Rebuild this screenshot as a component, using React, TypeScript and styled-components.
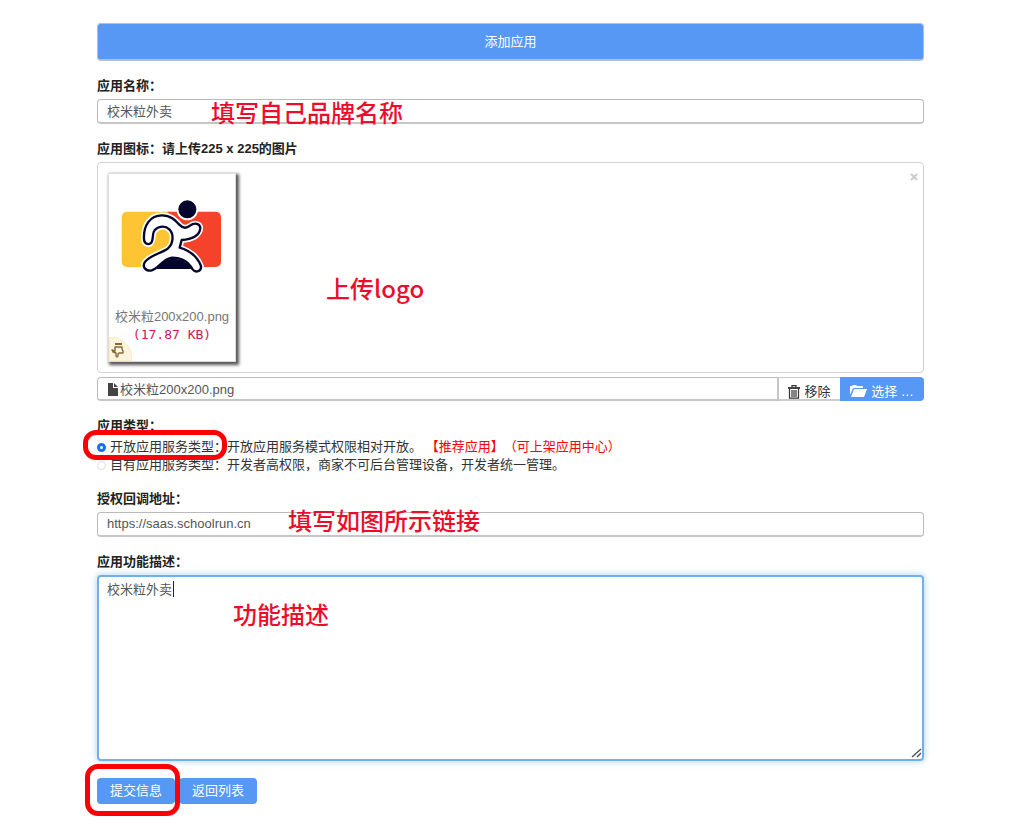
import React from "react";
import styled, { createGlobalStyle } from "styled-components";

const COLON = "\uFF1A";
const COMMA = "\uFF0C";

const GlobalStyle = createGlobalStyle`
  *, *::before, *::after { box-sizing: border-box; }
  body {
    margin: 0;
    background: #fff;
    color: #333;
    font: 13px/18px "Liberation Sans", "Noto Sans CJK SC", sans-serif;
    text-spacing-trim: space-all;
  }
  button, input, textarea { font: inherit; }
`;

const Page = styled.form`
  display: flex;
  flex-direction: column;
  gap: 15px;
  padding: 23px 100px 24px 97px;
`;

const Banner = styled.h1`
  margin: 0;
  height: 38px;
  border: 1px solid #b9bfca;
  border-bottom-width: 2px;
  border-radius: 4px;
  background: #5698f3;
  color: #fff;
  font-size: 13px;
  font-weight: 400;
  line-height: 36px;
  text-align: center;
`;

const Group = styled.div`
  position: relative;
  display: flex;
  flex-direction: column;
  gap: 3px;
`;

const RadioGroup = styled.fieldset`
  min-width: 0;
  margin: 0;
  padding: 0;
  border: 0;
`;

const Label = styled.label`
  color: #222;
  font-weight: 700;
  line-height: 20px;
`;

const Legend = styled.legend`
  padding: 0 0 2px;
  color: #222;
  font-weight: 700;
  line-height: 20px;
`;

const Options = styled.div`
  position: relative;
`;

const TextInput = styled.input`
  width: 100%;
  height: 25px;
  padding: 0 9px 1px;
  border: 1px solid #bbb;
  border-bottom: 2px solid #c6c6c6;
  border-radius: 4px;
  outline: 0;
  background: #fff;
  color: #555;
`;

const TextArea = styled.textarea`
  display: block;
  width: 100%;
  height: 186px;
  padding: 4px 8px;
  border: 2px solid #72b0e9;
  border-radius: 4px;
  outline: 0;
  resize: none;
  box-shadow: 0 0 7px rgba(102, 175, 233, 0.6);
  color: #555;
`;

const AreaWrap = styled.div`
  position: relative;
`;

const Caret = styled.span`
  position: absolute;
  top: 6px;
  left: 76px;
  width: 1px;
  height: 16px;
  background: #222;
`;

const Grip = styled.svg`
  position: absolute;
  right: 2px;
  bottom: 3px;
`;

const Note = styled.span<{ $left: number; $top: number }>`
  position: absolute;
  left: ${(p) => p.$left}px;
  top: ${(p) => p.$top}px;
  color: #ec0c2c;
  font: 500 24px/30px "Noto Sans CJK SC", sans-serif;
  white-space: nowrap;
  pointer-events: none;
`;

const Ring = styled.span<{ $left: number; $top: number; $width: number; $height: number }>`
  position: absolute;
  left: ${(p) => p.$left}px;
  top: ${(p) => p.$top}px;
  width: ${(p) => p.$width}px;
  height: ${(p) => p.$height}px;
  border: 5px solid #fc0006;
  border-radius: 13px;
  pointer-events: none;
`;

const UploadPanel = styled.div`
  position: relative;
  padding: 10px;
  border: 1px solid #d2d2d2;
  border-radius: 4px;
`;

const Close = styled.button`
  position: absolute;
  top: 8px;
  right: 3px;
  display: flex;
  padding: 2px;
  border: 0;
  background: none;
`;

const Thumb = styled.figure`
  position: relative;
  display: flex;
  flex-direction: column;
  width: 128px;
  height: 189px;
  margin: 0;
  border: 1px solid #ddd;
  background: #fff;
  box-shadow: 2px 2px 3px 1px #555;
  text-align: center;
`;

const Preview = styled.svg`
  display: block;
  margin: 20px 0 28px 7px;
`;

const FileName = styled.figcaption`
  color: #777;
  line-height: 18px;
  white-space: nowrap;
`;

const FileSize = styled.samp`
  color: #d6145a;
  font: 13px/17px "DejaVu Sans Mono", monospace;
`;

const Flag = styled.span`
  position: absolute;
  left: 0;
  bottom: 0;
  display: flex;
  width: 23px;
  height: 24px;
  padding: 5px 1px;
  border-radius: 0 20px 0 0;
  border: 1px solid #f8ecc8;
  background: #fcf5dc;
`;

const FileRow = styled.div`
  display: flex;
  height: 24px;
  margin-top: 1px;
`;

const FileCaption = styled.div`
  display: flex;
  align-items: center;
  flex: 1;
  gap: 2px;
  padding: 2px 10px 0;
  border: 1px solid #bbb;
  border-bottom: 2px solid #c6c6c6;
  border-right: 2px solid #c6c6c6;
  border-radius: 4px 0 0 4px;
  color: #555;
`;

const FileButton = styled.button<{ $primary?: boolean }>`
  display: flex;
  align-items: center;
  justify-content: center;
  gap: 4px;
  width: ${(p) => (p.$primary ? 84 : 61)}px;
  padding: ${(p) => (p.$primary ? "5px 0 0" : "6px 0 0")};
  border: ${(p) => (p.$primary ? "0" : "solid #ccc")};
  border-width: ${(p) => (p.$primary ? "0" : "1px 0 2px 0")};
  border-radius: ${(p) => (p.$primary ? "0 4px 4px 0" : "0")};
  background: ${(p) => (p.$primary ? "#5698f3" : "#fff")};
  color: ${(p) => (p.$primary ? "#fff" : "#333")};
`;

const Option = styled.label`
  display: flex;
  align-items: center;
  gap: 4px;
  white-space: nowrap;
`;

const Radio = styled.input`
  appearance: none;
  width: 9px;
  height: 9px;
  margin: 1px 0 0;
  border: 1px solid #ddd;
  border-radius: 50%;
  background: #fff;

  &:checked {
    border: 3px solid #1470f5;
  }
`;

const Highlight = styled.span`
  color: #fb0007;
`;

const Actions = styled.div`
  position: relative;
  display: flex;
  gap: 4px;
  margin-top: 2px;
`;

const Action = styled.button`
  height: 26px;
  padding: 0 13px;
  border: 0;
  border-radius: 4px;
  background: #5698f3;
  color: #fff;
`;

const BODY =
  "M84 135C82 95 102 64 138 64C164 64 177 78 190 92C201 104 211 104 222 95C236 84 253 89 253 103C251 123 230 137 197 138L191 161C218 169 244 187 255 216C257 232 239 238 230 226C217 203 194 191 168 191C140 194 128 225 105 230C87 231 79 218 86 205C98 186 132 179 155 164C173 149 174 120 160 106C145 92 121 98 113 114C109 126 112 141 104 148C95 154 84 148 84 135Z";

const RunnerLogo = () => (
  <Preview width="112" height="86" viewBox="0 0 336 258" role="img" aria-label="校米粒">
    <path d="M34 53H170V90L182 110V219H34Q17 219 17 202V70Q17 53 34 53Z" fill="#fec433" />
    <path d="M154 53H298Q315 53 315 70V202Q315 219 298 219H182V90Z" fill="#f4432a" />
    <path d="M110 90H150L176 105V150L110 160Z" fill="#fec433" />
    <circle cx="214" cy="47" r="32" fill="#fff" />
    <circle cx="214" cy="46" r="27" fill="#04042c" />
    <g strokeLinejoin="round">
      <path d={BODY} fill="#fff" stroke="#fff" strokeWidth="17" />
      <path d="M110 114C121 98 145 92 160 106C174 120 173 149 155 164L104 165Z" fill="none" />
      <path d="M122 225C136 202 154 194 172 194C196 194 216 206 230 225Z" fill="#04042c" />
      <path d={BODY} fill="#fff" stroke="#04042c" strokeWidth="7" />
    </g>
  </Preview>
);

const HandIcon = () => (
  <svg width="13" height="15" viewBox="0 0 13 15" fill="none" stroke="#87683a" strokeWidth="1.4" strokeLinejoin="round">
    <path d="M4 1H11" strokeWidth="2" />
    <path d="M4 4H11V6L12 8V10H8L7 11V13Q6 15 5 13V10L2 9L1 7L4 8Z" />
  </svg>
);

const FileIcon = () => (
  <svg width="10" height="13" viewBox="0 0 10 13" fill="#444">
    <path d="M0 0H5V5H10V13H0Z" />
    <path d="M6 0L10 4H6Z" />
  </svg>
);

const TrashIcon = () => (
  <svg width="12" height="14" viewBox="0 0 12 14" fill="none" stroke="#333">
    <path d="M0 3H12" strokeWidth="1.8" />
    <path d="M4 2.5V.7H8V2.5M1.500 4V13.200H10.500V4M4 5V12M6 5V12M8 5V12" strokeWidth="1.2" />
  </svg>
);

const FolderIcon = () => (
  <svg width="17" height="13" viewBox="0 0 17 13" fill="#fff">
    <path d="M0 10V2Q0 1 1 1H2L3 0H6L7 1H12Q13 1 13 2V3H4Q3 3 2.600 4Z" />
    <path d="M4 4H17L14 12H1Z" />
  </svg>
);

export default function App() {
  return (
    <>
      <GlobalStyle />
      <Page onSubmit={(e) => e.preventDefault()}>
        <Banner>添加应用</Banner>

        <Group>
          <Label htmlFor="app-name">应用名称{COLON}</Label>
          <TextInput id="app-name" defaultValue="校米粒外卖" />
          <Note $left={114} $top={21}>填写自己品牌名称</Note>
        </Group>

        <Group>
          <Label as="div">应用图标{COLON}请上传225 x 225的图片</Label>
          <UploadPanel>
            <Thumb>
              <RunnerLogo />
              <FileName>校米粒200x200.png</FileName>
              <FileSize>(17.87 KB)</FileSize>
              <Flag><HandIcon /></Flag>
            </Thumb>
            <Close type="button" aria-label="关闭">
              <svg width="8" height="8" viewBox="0 0 8 8" stroke="#ccc" strokeWidth="2">
                <path d="M1 1L7 7M7 1L1 7" />
              </svg>
            </Close>
            <Note $left={228} $top={110}>上传logo</Note>
          </UploadPanel>
          <FileRow>
            <FileCaption>
              <FileIcon />
              <span>校米粒200x200.png</span>
            </FileCaption>
            <FileButton type="button"><TrashIcon />移除</FileButton>
            <FileButton type="button" $primary><FolderIcon />选择 …</FileButton>
          </FileRow>
        </Group>

        <RadioGroup>
          <Legend>应用类型{COLON}</Legend>
          <Options>
            <Option>
              <Radio type="radio" name="app-type" defaultChecked />
              <span>
                开放应用服务类型{COLON}开放应用服务模式权限相对开放。{" "}
                <Highlight>【推荐应用】{"\uFF08"}可上架应用中心{"\uFF09"}</Highlight>
              </span>
            </Option>
            <Option>
              <Radio type="radio" name="app-type" />
              <span>
                自有应用服务类型{COLON}开发者高权限{COMMA}商家不可后台管理设备{COMMA}开发者统一管理。
              </span>
            </Option>
            <Ring $left={-14} $top={-8} $width={144} $height={30} />
          </Options>
        </RadioGroup>

        <Group>
          <Label htmlFor="callback">授权回调地址{COLON}</Label>
          <TextInput id="callback" defaultValue="https://saas.schoolrun.cn" />
          <Note $left={191} $top={16}>填写如图所示链接</Note>
        </Group>

        <Group>
          <Label htmlFor="description">应用功能描述{COLON}</Label>
          <AreaWrap>
            <TextArea id="description" defaultValue="校米粒外卖" />
            <Caret />
            <Grip width="11" height="10" viewBox="0 0 11 10" stroke="#555" strokeWidth="1.5">
              <path d="M1 9L10 1M6 9L10 5" />
            </Grip>
          </AreaWrap>
          <Note $left={136} $top={47}>功能描述</Note>
        </Group>

        <Actions>
          <Action type="submit">提交信息</Action>
          <Action type="button">返回列表</Action>
          <Ring $left={-12} $top={-14} $width={95} $height={52} />
        </Actions>
      </Page>
    </>
  );
}
